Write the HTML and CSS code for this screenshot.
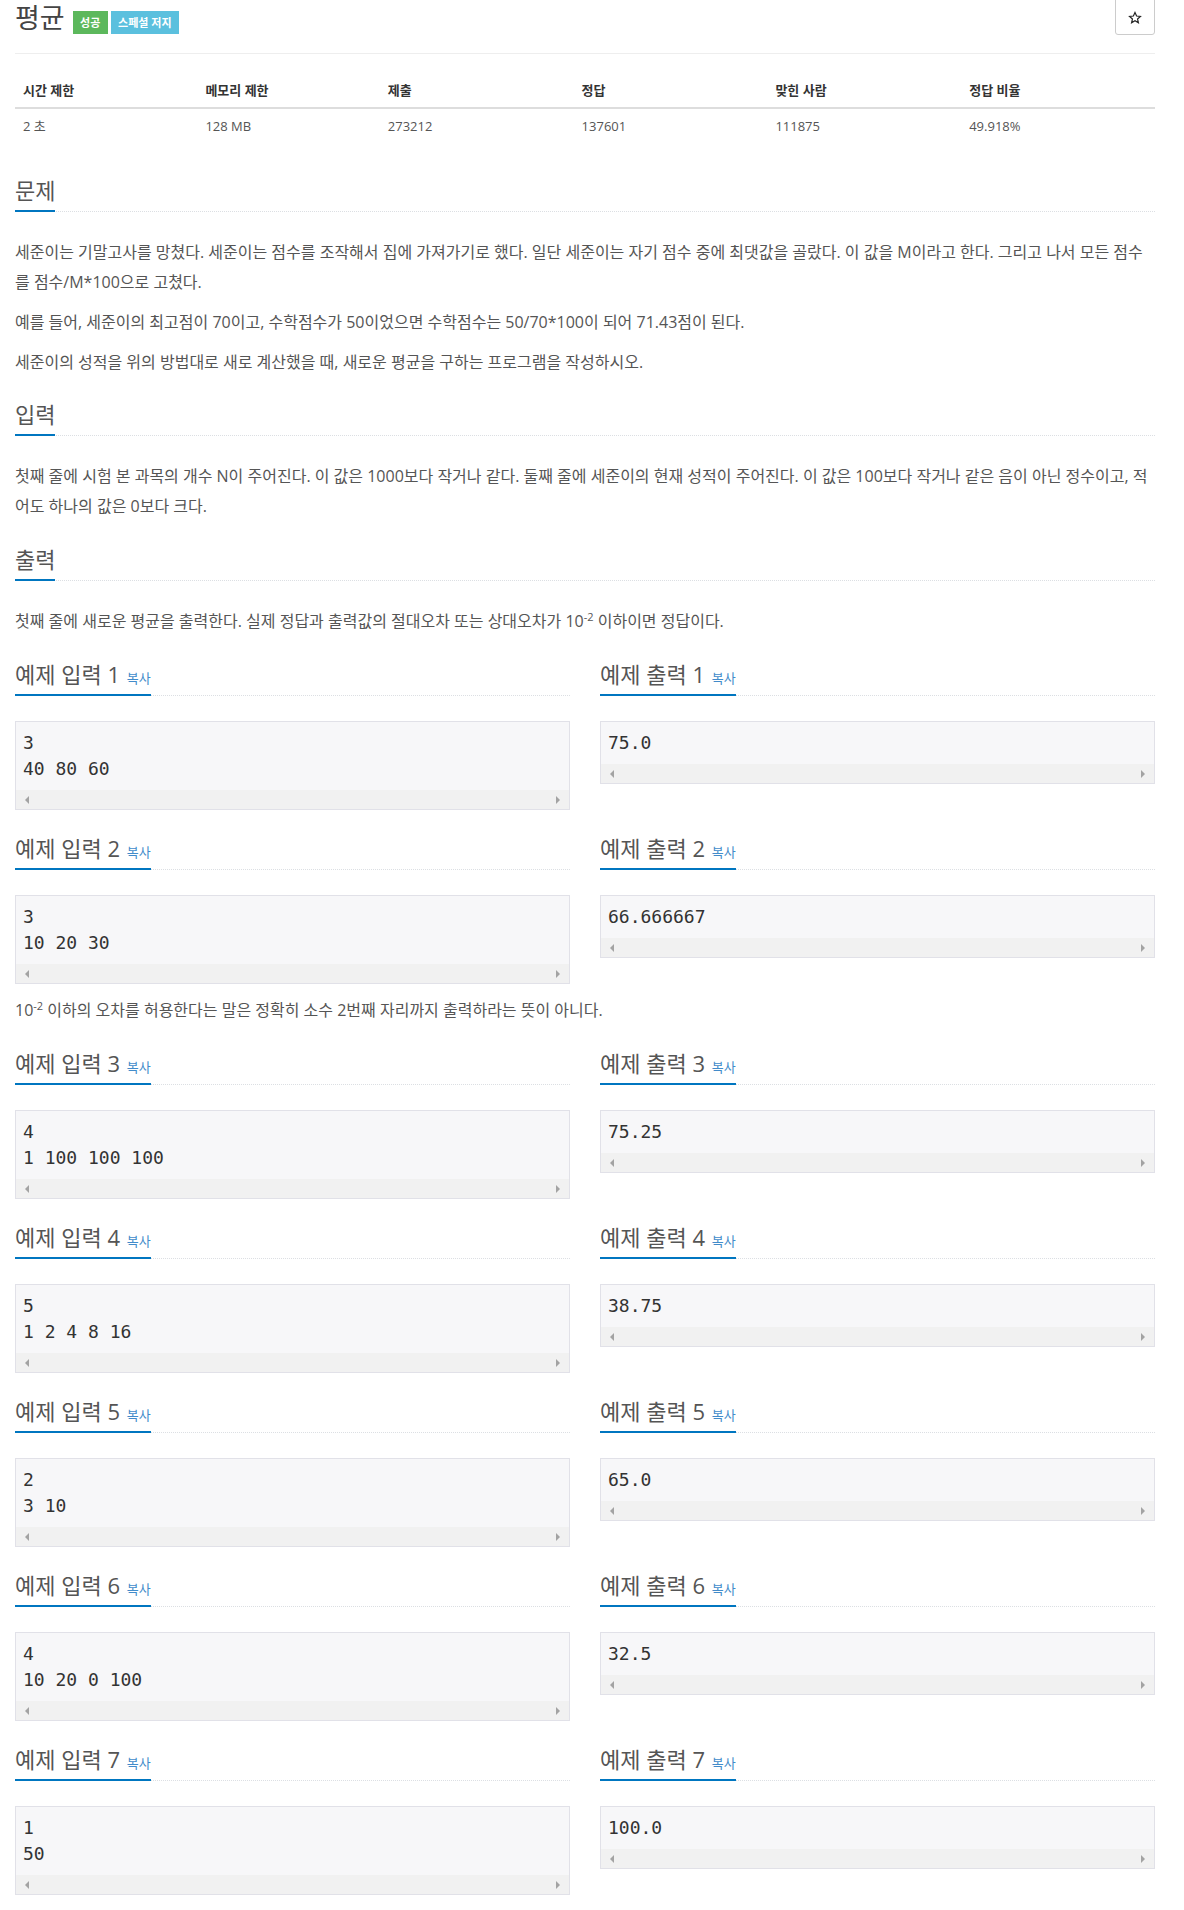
FILE: index.html
```html
<!DOCTYPE html>
<html lang="ko">
<head>
<meta charset="utf-8">
<title>평균</title>
<link rel="stylesheet" href="styles.css">
</head>
<body>
<div class="container">
  <div class="page-header">
    <h1 class="title">평균</h1>
    <span class="label label-success">성공</span>
    <span class="label label-info">스페셜 저지</span>
    <button class="star-btn" type="button" aria-label="즐겨찾기">
      <svg class="star" viewBox="0 0 24 24" width="14" height="14"><path d="M12 2.6l2.75 6.05 6.6.62-4.98 4.39 1.46 6.48L12 16.77l-5.830 3.37 1.46-6.48-4.98-4.39 6.6-.62z" fill="none" stroke="#222" stroke-width="2" stroke-linejoin="miter"/></svg>
    </button>
  </div>

  <table class="info">
    <thead>
      <tr>
        <th class="w16">시간 제한</th>
        <th class="w16">메모리 제한</th>
        <th class="w17">제출</th>
        <th class="w17">정답</th>
        <th class="w17">맞힌 사람</th>
        <th class="w17">정답 비율</th>
      </tr>
    </thead>
    <tbody>
      <tr>
        <td>2 초</td>
        <td>128 MB</td>
        <td>273212</td>
        <td>137601</td>
        <td>111875</td>
        <td>49.918%</td>
      </tr>
    </tbody>
  </table>

  <section class="section text-section">
    <div class="headline"><h2>문제</h2></div>
    <div class="problem-text">
      <p>세준이는 기말고사를 망쳤다. 세준이는 점수를 조작해서 집에 가져가기로 했다. 일단 세준이는 자기 점수 중에 최댓값을 골랐다. 이 값을 M이라고 한다. 그리고 나서 모든 점수를 점수/M*100으로 고쳤다.</p>
      <p>예를 들어, 세준이의 최고점이 70이고, 수학점수가 50이었으면 수학점수는 50/70*100이 되어 71.43점이 된다.</p>
      <p>세준이의 성적을 위의 방법대로 새로 계산했을 때, 새로운 평균을 구하는 프로그램을 작성하시오.</p>
    </div>
  </section>

  <section class="section text-section">
    <div class="headline"><h2>입력</h2></div>
    <div class="problem-text">
      <p>첫째 줄에 시험 본 과목의 개수 N이 주어진다. 이 값은 1000보다 작거나 같다. 둘째 줄에 세준이의 현재 성적이 주어진다. 이 값은 100보다 작거나 같은 음이 아닌 정수이고, 적어도 하나의 값은 0보다 크다.</p>
    </div>
  </section>

  <section class="section">
    <div class="headline"><h2>출력</h2></div>
    <div class="problem-text">
      <p>첫째 줄에 새로운 평균을 출력한다. 실제 정답과 출력값의 절대오차 또는 상대오차가 10<sup>-2</sup> 이하이면 정답이다.</p>
    </div>
  </section>

  <div class="sample-row">
    <section class="section">
      <div class="headline"><h2>예제 입력 1 <span class="copy">복사</span></h2></div>
      <div class="sample-box"><pre>3
40 80 60</pre><div class="hscroll"><i class="arr-l"></i><i class="arr-r"></i></div></div>
    </section>
    <section class="section">
      <div class="headline"><h2>예제 출력 1 <span class="copy">복사</span></h2></div>
      <div class="sample-box"><pre>75.0</pre><div class="hscroll"><i class="arr-l"></i><i class="arr-r"></i></div></div>
    </section>
  </div>

  <div class="sample-row">
    <section class="section">
      <div class="headline"><h2>예제 입력 2 <span class="copy">복사</span></h2></div>
      <div class="sample-box"><pre>3
10 20 30</pre><div class="hscroll"><i class="arr-l"></i><i class="arr-r"></i></div></div>
    </section>
    <section class="section">
      <div class="headline"><h2>예제 출력 2 <span class="copy">복사</span></h2></div>
      <div class="sample-box"><pre>66.666667</pre><div class="hscroll"><i class="arr-l"></i><i class="arr-r"></i></div></div>
    </section>
  </div>

  <div class="problem-text note">
    <p>10<sup>-2</sup> 이하의 오차를 허용한다는 말은 정확히 소수 2번째 자리까지 출력하라는 뜻이 아니다.</p>
  </div>

  <div class="sample-row">
    <section class="section">
      <div class="headline"><h2>예제 입력 3 <span class="copy">복사</span></h2></div>
      <div class="sample-box"><pre>4
1 100 100 100</pre><div class="hscroll"><i class="arr-l"></i><i class="arr-r"></i></div></div>
    </section>
    <section class="section">
      <div class="headline"><h2>예제 출력 3 <span class="copy">복사</span></h2></div>
      <div class="sample-box"><pre>75.25</pre><div class="hscroll"><i class="arr-l"></i><i class="arr-r"></i></div></div>
    </section>
  </div>

  <div class="sample-row">
    <section class="section">
      <div class="headline"><h2>예제 입력 4 <span class="copy">복사</span></h2></div>
      <div class="sample-box"><pre>5
1 2 4 8 16</pre><div class="hscroll"><i class="arr-l"></i><i class="arr-r"></i></div></div>
    </section>
    <section class="section">
      <div class="headline"><h2>예제 출력 4 <span class="copy">복사</span></h2></div>
      <div class="sample-box"><pre>38.75</pre><div class="hscroll"><i class="arr-l"></i><i class="arr-r"></i></div></div>
    </section>
  </div>

  <div class="sample-row">
    <section class="section">
      <div class="headline"><h2>예제 입력 5 <span class="copy">복사</span></h2></div>
      <div class="sample-box"><pre>2
3 10</pre><div class="hscroll"><i class="arr-l"></i><i class="arr-r"></i></div></div>
    </section>
    <section class="section">
      <div class="headline"><h2>예제 출력 5 <span class="copy">복사</span></h2></div>
      <div class="sample-box"><pre>65.0</pre><div class="hscroll"><i class="arr-l"></i><i class="arr-r"></i></div></div>
    </section>
  </div>

  <div class="sample-row">
    <section class="section">
      <div class="headline"><h2>예제 입력 6 <span class="copy">복사</span></h2></div>
      <div class="sample-box"><pre>4
10 20 0 100</pre><div class="hscroll"><i class="arr-l"></i><i class="arr-r"></i></div></div>
    </section>
    <section class="section">
      <div class="headline"><h2>예제 출력 6 <span class="copy">복사</span></h2></div>
      <div class="sample-box"><pre>32.5</pre><div class="hscroll"><i class="arr-l"></i><i class="arr-r"></i></div></div>
    </section>
  </div>

  <div class="sample-row">
    <section class="section">
      <div class="headline"><h2>예제 입력 7 <span class="copy">복사</span></h2></div>
      <div class="sample-box"><pre>1
50</pre><div class="hscroll"><i class="arr-l"></i><i class="arr-r"></i></div></div>
    </section>
    <section class="section">
      <div class="headline"><h2>예제 출력 7 <span class="copy">복사</span></h2></div>
      <div class="sample-box"><pre>100.0</pre><div class="hscroll"><i class="arr-l"></i><i class="arr-r"></i></div></div>
    </section>
  </div>
</div>
</body>
</html>
```

FILE: styles.css
```css
* { box-sizing: border-box; }

html, body {
  margin: 0;
  padding: 0;
  background: #fff;
}

body {
  font-family: "Open Sans", "Noto Sans CJK KR", sans-serif;
  font-size: 14px;
  line-height: 1.42857;
  color: #555;
}

.container {
  width: 1170px;
  padding: 0 15px;
}

/* header */
.page-header {
  display: flex;
  align-items: flex-start;
  height: 54px;
  padding-bottom: 17px;
  border-bottom: 1px solid #eee;
  margin-bottom: 19px;
}

.title {
  margin: 0 8px 0 0;
  font-size: 27px;
  line-height: 36px;
  height: 36px;
  font-weight: 400;
  color: #444;
}

.label {
  display: inline-block;
  margin-top: 11px;
  margin-right: 3px;
  height: 23px;
  padding: 0 7.4px;
  font-size: 11px;
  line-height: 23px;
  font-weight: 700;
  color: #fff;
}

.label-success { background: #5cb85c; }
.label-info { background: #5bc0de; }

.star-btn {
  margin-left: auto;
  margin-top: -4px;
  width: 40px;
  height: 39px;
  padding: 4px 0 0 0;
  border: 1px solid #ccc;
  border-radius: 3px;
  background: #fff;
  display: flex;
  align-items: center;
  justify-content: center;
}

.star { display: block; }

/* info table */
.info {
  width: 100%;
  border-collapse: collapse;
  margin-bottom: 20px;
  font-size: 13px;
}

.info th,
.info td {
  padding: 8px;
  line-height: 18px;
  text-align: left;
}

.info th {
  color: #333;
  font-weight: 700;
  border-bottom: 2px solid #ddd;
}

.info td { color: #555; }

.w16 { width: 16%; }
.w17 { width: 17%; }

/* sections */
.section {
  padding-top: 17px;
}

.text-section {
  padding-top: 16px;
}

.headline {
  display: flex;
  border-bottom: 1px dotted #dcdfe3;
  margin-bottom: 25px;
}

.headline h2 {
  margin: 0 0 -1px 0;
  padding-bottom: 9px;
  border-bottom: 2px solid #0076c0;
  font-size: 22px;
  line-height: 22px;
  height: 33px;
  font-weight: 400;
  color: #555;
  white-space: nowrap;
}

.copy {
  font-size: 13px;
  line-height: 1;
  color: #428bca;
  margin-left: 1px;
}

.problem-text {
  font-size: 16px;
  line-height: 30px;
  word-break: break-all;
  color: #555;
}

.problem-text p {
  margin: 0 0 10px 0;
}

.problem-text sup {
  font-size: 11px;
  line-height: 0;
  vertical-align: 6px;
}

.note p { margin-top: 1px; }

/* samples */
.sample-row {
  display: grid;
  grid-template-columns: 1fr 1fr;
  column-gap: 30px;
  align-items: start;
}

.sample-box {
  border: 1px solid #e1e1e8;
  background: #f7f7f9;
  margin-bottom: 10px;
}

.sample-box pre {
  margin: 0;
  padding: 8px 9px 8px 7px;
  font-family: "DejaVu Sans Mono", monospace;
  font-size: 18px;
  line-height: 26px;
  color: #333;
  white-space: pre;
}

.hscroll {
  height: 19px;
  background: #f1f1f1;
  display: flex;
  align-items: center;
  justify-content: space-between;
  padding: 0 9px;
}

.arr-l,
.arr-r {
  display: block;
  width: 0;
  height: 0;
  border-top: 4px solid transparent;
  border-bottom: 4px solid transparent;
}

.arr-l { border-right: 4px solid #a3a3a3; }
.arr-r { border-left: 4px solid #a3a3a3; }
```
